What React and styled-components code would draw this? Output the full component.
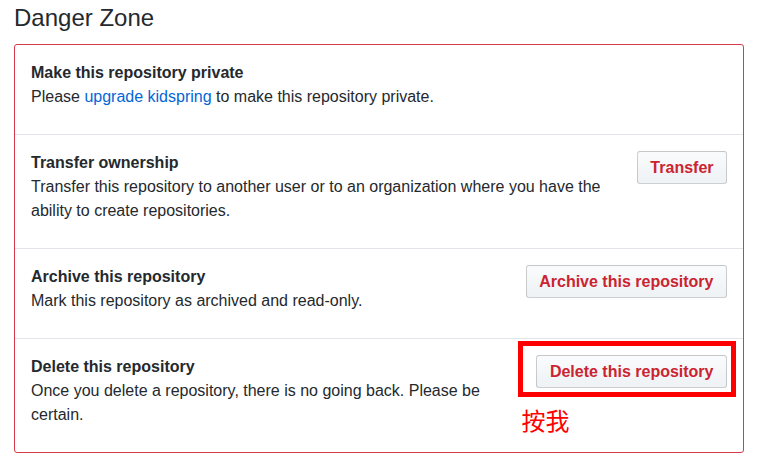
import React from "react";
import styled, { createGlobalStyle } from "styled-components";

const Global = createGlobalStyle`
  html, body { margin: 0; padding: 0; background: #fff; }
  body {
    font-family: "Liberation Sans", Arial, sans-serif;
    color: #24292e;
    font-size: 16px;
    line-height: 24px;
  }
`;

const Page = styled.div`
  padding: 3px 15px 0 14px;
`;

const Heading = styled.h2`
  margin: 0 0 11px;
  font-size: 24px;
  line-height: 30px;
  font-weight: 400;
  color: #24292e;
`;

const Box = styled.div`
  border: 1px solid #d73a49;
  border-radius: 3px;
  background: #fff;
`;

const Row = styled.div`
  display: flex;
  align-items: flex-start;
  gap: 16px;
  padding: 16px;
  position: relative;
  & + & {
    border-top: 1px solid #e1e4e8;
  }
`;

const Info = styled.div`
  flex: 1;
  min-width: 0;
`;

const Title = styled.strong`
  display: block;
  font-weight: 700;
  color: #24292e;
`;

const Desc = styled.p`
  margin: 0 0 9px;
  color: #24292e;
`;

const Link = styled.a`
  color: #0366d6;
  text-decoration: none;
`;

const Button = styled.button`
  flex: none;
  font-family: "Liberation Sans", Arial, sans-serif;
  font-size: 16px;
  font-weight: 700;
  line-height: 19px;
  padding: 6px 12.5px;
  color: #cb2431;
  background-image: linear-gradient(-180deg, #fafbfc 0%, #eff3f6 90%);
  border: 1px solid rgba(27, 31, 35, 0.2);
  border-radius: 3px;
  white-space: nowrap;
  cursor: pointer;
`;

const Marked = styled.div`
  position: relative;
  flex: none;
  display: flex;
`;

const Outline = styled.div`
  position: absolute;
  left: -18px;
  top: -14px;
  right: -9px;
  bottom: -9px;
  border: 5px solid #ff0000;
  pointer-events: none;
`;

const Note = styled.span`
  position: absolute;
  left: -15px;
  top: 49px;
  font-family: "Noto Sans CJK SC", sans-serif;
  font-size: 24px;
  line-height: 32px;
  color: #ff0000;
  white-space: nowrap;
`;

export default function App() {
  return (
    <>
      <Global />
      <Page>
        <Heading>Danger Zone</Heading>
        <Box>
          <Row>
            <Info>
              <Title>Make this repository private</Title>
              <Desc>
                Please <Link href="#">upgrade kidspring</Link> to make this repository private.
              </Desc>
            </Info>
          </Row>
          <Row>
            <Info>
              <Title>Transfer ownership</Title>
              <Desc>
                Transfer this repository to another user or to an organization where you have the ability to create repositories.
              </Desc>
            </Info>
            <Button>Transfer</Button>
          </Row>
          <Row>
            <Info>
              <Title>Archive this repository</Title>
              <Desc>Mark this repository as archived and read-only.</Desc>
            </Info>
            <Button>Archive this repository</Button>
          </Row>
          <Row>
            <Info>
              <Title>Delete this repository</Title>
              <Desc>
                Once you delete a repository, there is no going back. Please be certain.
              </Desc>
            </Info>
            <Marked>
              <Button>Delete this repository</Button>
              <Outline />
              <Note>按我</Note>
            </Marked>
          </Row>
        </Box>
      </Page>
    </>
  );
}
